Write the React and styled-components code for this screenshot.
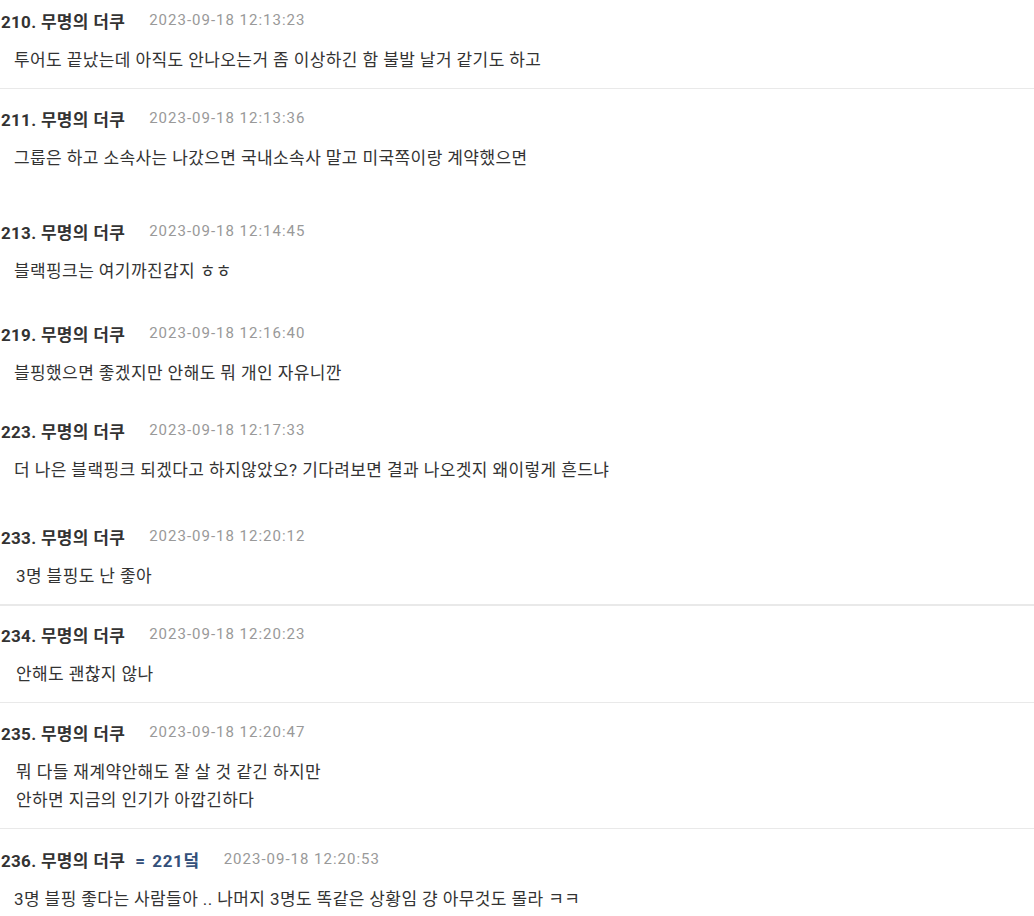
import styled, { createGlobalStyle } from 'styled-components';

// Grundstil för sidan
const GlobalStyle = createGlobalStyle`
  html, body {
    margin: 0;
    padding: 0;
    background: #fff;
  }
  body {
    font-family: Roboto, "Noto Sans CJK KR", sans-serif;
    color: #333;
  }
`;

const textColor = '#333';
const dateColor = '#999';
const lineColor = '#e9e9e9';

const CommentList = styled.div`
  width: 1034px;
  display: flex;
  flex-direction: column;
`;

const CommentItem = styled.div`
  padding: ${(p) => p.$top}px 0 ${(p) => 14 + p.$extra}px 0;
  border-bottom: ${(p) => (p.$line ? `${p.$line}px solid ${lineColor}` : 'none')};
`;

const CommentHeader = styled.div`
  display: flex;
  align-items: center;
  height: 24px;
  padding-left: 1px;
`;

const Author = styled.span`
  font-size: 17px;
  font-weight: 700;
  letter-spacing: 0.3px;
  color: ${textColor};
  white-space: nowrap;
`;

// Svar på en annan kommentar
const Reply = styled.span`
  margin-left: 10px;
  word-spacing: 2px;
  letter-spacing: 0.6px;
  color: #34507a;
`;

const DateText = styled.span`
  margin-left: 24px;
  font-size: 15px;
  letter-spacing: 1px;
  color: ${dateColor};
  white-space: nowrap;
`;

const CommentBody = styled.div`
  margin-top: 14px;
  padding-left: ${(p) => p.$indent}px;
  font-size: 17px;
  letter-spacing: 0.4px;
  line-height: 28px;
  color: ${textColor};
`;

const comments = [
  { no: 210, date: '2023-09-18 12:13:23', text: ['투어도 끝났는데 아직도 안나오는거 좀 이상하긴 함 불발 날거 같기도 하고'], top: 8, extra: 0, line: 1, indent: 14 },
  { no: 211, date: '2023-09-18 12:13:36', text: ['그룹은 하고 소속사는 나갔으면 국내소속사 말고 미국쪽이랑 계약했으면'], top: 17, extra: 16, line: 0, indent: 14 },
  { no: 213, date: '2023-09-18 12:14:45', text: ['블랙핑크는 여기까진갑지 ㅎㅎ'], top: 17, extra: 5, line: 0, indent: 14 },
  { no: 219, date: '2023-09-18 12:16:40', text: ['블핑했으면 좋겠지만 안해도 뭐 개인 자유니깐'], top: 17, extra: 0, line: 0, indent: 14 },
  { no: 223, date: '2023-09-18 12:17:33', text: ['더 나은 블랙핑크 되겠다고 하지않았오? 기다려보면 결과 나오겟지 왜이렇게 흔드냐'], top: 17, extra: 9, line: 0, indent: 14 },
  { no: 233, date: '2023-09-18 12:20:12', text: ['3명 블핑도 난 좋아'], top: 17, extra: 0, line: 2, indent: 16 },
  { no: 234, date: '2023-09-18 12:20:23', text: ['안해도 괜찮지 않나'], top: 16, extra: 0, line: 1, indent: 16 },
  { no: 235, date: '2023-09-18 12:20:47', text: ['뭐 다들 재계약안해도 잘 살 것 같긴 하지만', '안하면 지금의 인기가 아깝긴하다'], top: 17, extra: 0, line: 1, indent: 16 },
  { no: 236, date: '2023-09-18 12:20:53', reply: '221덬', text: ['3명 블핑 좋다는 사람들아 .. 나머지 3명도 똑같은 상황임 걍 아무것도 몰라 ㅋㅋ'], top: 18, extra: 0, line: 0, indent: 14 },
];

const App = () => {
  return (
    <>
      <GlobalStyle />
      <CommentList>
        {comments.map((c) => (
          <CommentItem key={c.no} $top={c.top} $extra={c.extra} $line={c.line}>
            <CommentHeader>
              <Author>
                {c.no}. 무명의 더쿠
                {c.reply && <Reply>= {c.reply}</Reply>}
              </Author>
              <DateText>{c.date}</DateText>
            </CommentHeader>
            <CommentBody $indent={c.indent}>
              {c.text.map((line, i) => (
                <div key={i}>{line}</div>
              ))}
            </CommentBody>
          </CommentItem>
        ))}
      </CommentList>
    </>
  );
};

export default App;
